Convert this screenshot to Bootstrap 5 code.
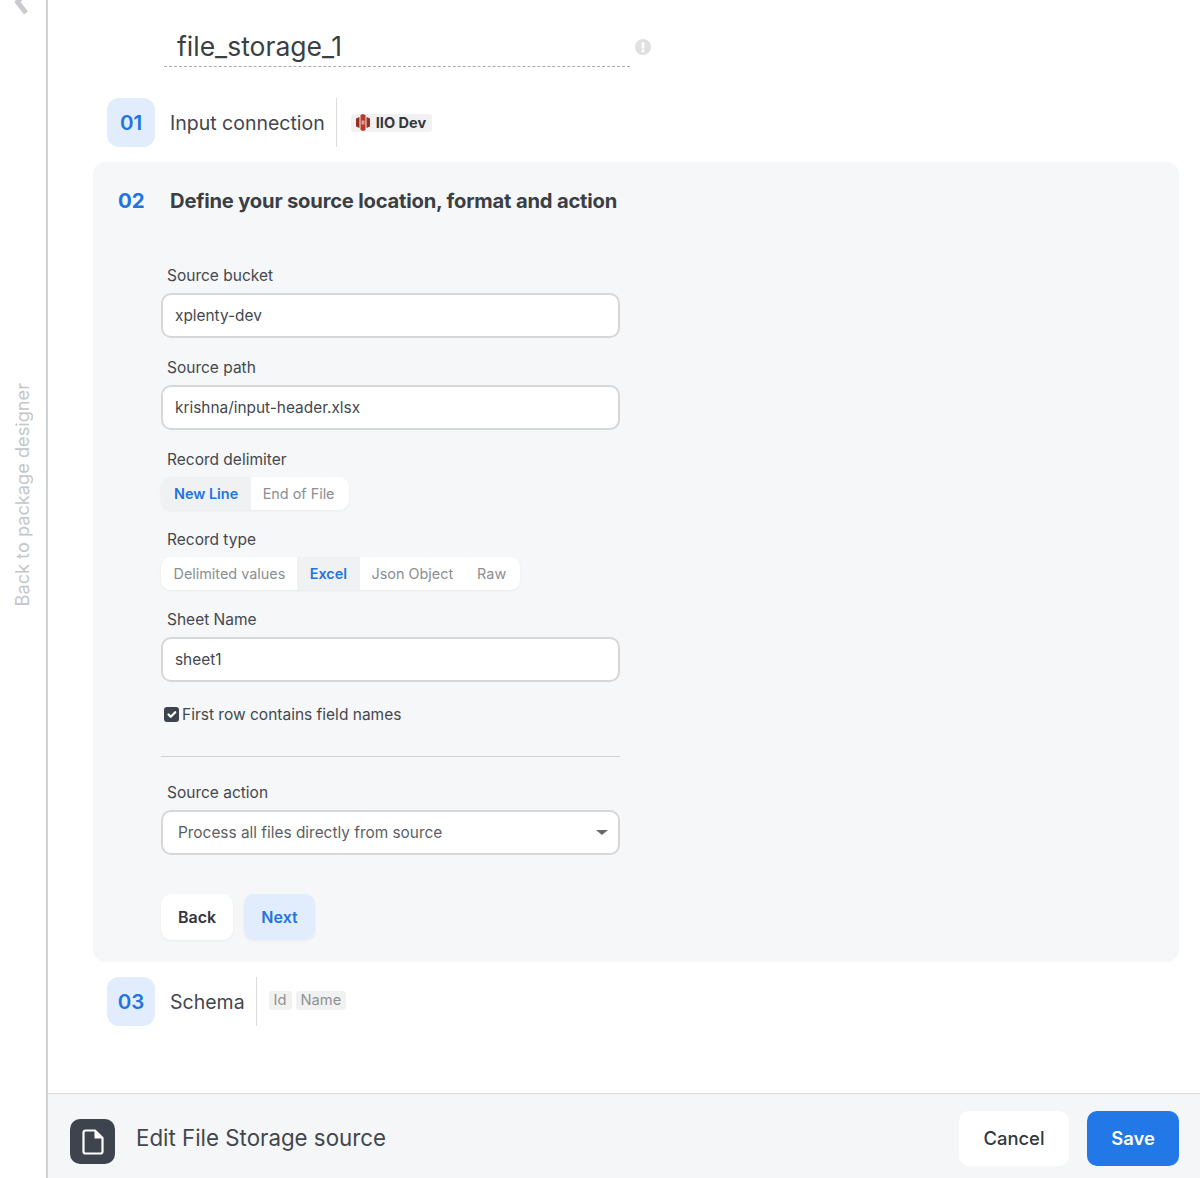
<!DOCTYPE html>
<html lang="en">
<head>
  <meta charset="UTF-8">
  <meta name="viewport" content="width=device-width, initial-scale=1.0">
  <title>Edit File Storage source</title>
  <link href="https://cdn.jsdelivr.net/npm/bootstrap@5.3.0/dist/css/bootstrap.min.css" rel="stylesheet">
  <style>
    html, body { height: 100%; }
    body {
      font-family: 'Inter', 'Liberation Sans', sans-serif;
      color: #3d4249;
      background-color: #ffffff;
      overflow: hidden;
    }
    .page-wrap { height: 1178px; }
    /* left rail */
    .back-rail {
      width: 48px;
      border-right: 2px solid #cfd0d2;
      position: relative;
      flex-shrink: 0;
    }
    .back-chevron { display: block; margin-left: 14px; }
    .back-text {
      writing-mode: vertical-rl;
      transform: rotate(180deg);
      color: #c4c6c9;
      font-size: 18.2px;
      line-height: 22px;
      white-space: nowrap;
      margin: 367px 0 0 11px;
    }
    .main-col { min-width: 0; }
    .content-area { padding-top: 28px; }
    /* title */
    .title-row { margin-left: 116px; margin-bottom: 31px; }
    .title-box {
      width: 466px;
      height: 39px;
      border-bottom: 1px dashed #a9abae;
      padding-left: 13px;
      font-size: 26.5px;
      line-height: 36px;
      color: #3a3f45;
    }
    .title-info { margin: 11px 0 0 5px; }
    /* steps */
    .step-row { margin-left: 59px; height: 49px; }
    .step-num {
      width: 48px;
      height: 49px;
      padding-top: 1px;
      border-radius: 12px;
      background-color: #e1edfc;
      color: #1f74e0;
      font-size: 20.5px;
      font-weight: 600;
    }
    .step-name { font-size: 19.5px; margin-left: 15px; padding-right: 11px; color: #42474d; height: 49px; line-height: 50px; border-right: 1px solid #dcdde0; }
    .step-tag {
      background-color: #f1f1f2;
      border-radius: 3px;
      font-size: 14.7px;
      line-height: 19px;
      padding: 0 5px;
      color: #8f9194;
    }
    .tag-dev { font-size: 14.5px; font-weight: 700; color: #33373c; margin-left: 14px; padding: 0 5px; height: 18px; width: 81px; }
    .tag-logo { margin-right: 2px; flex-shrink: 0; }
    .tag-list { margin: 0 0 2px 12px; }
    /* panel */
    .step-panel {
      margin: 15px 21px 15px 45px;
      background-color: #f6f7f9;
      border-radius: 12px;
      padding: 24px 25px 22px 25px;
      height: 800px;
    }
    .panel-head { height: 30px; margin-bottom: 50px; line-height: 30px; }
    .panel-num { color: #1f74e0; font-size: 20.5px; font-weight: 700; width: 52px; }
    .panel-title { font-size: 20.2px; font-weight: 700; color: #3a3f45; letter-spacing: -0.2px; }
    .form-wrap { width: 459px; margin-left: 43px; }
    .field-block { margin-bottom: 20px; }
    .field-label {
      display: block;
      font-size: 15.5px;
      line-height: 19px;
      margin: 0 0 8px 6px;
      color: #43484e;
    }
    .text-input {
      height: 45px;
      border: 2px solid #d6d7d9;
      border-radius: 10px;
      padding: 0 12px 1px;
      font-size: 15.4px;
      color: #43484e;
      box-shadow: none;
    }
    .select-input {
      height: 45px;
      border: 2px solid #d6d7d9;
      border-radius: 10px;
      padding: 0 30px 0 15px;
      font-size: 15.4px;
      color: #5b5f65;
      background-image: url("data:image/svg+xml,%3csvg xmlns='http://www.w3.org/2000/svg' viewBox='0 0 12 5'%3e%3cpath fill='%23666a70' d='M0 0h12L6 5z'/%3e%3c/svg%3e");
      background-size: 12px 5px;
      background-position: right 10px center;
    }
    .toggle-group {
      height: 33px;
      border-radius: 10px;
      box-shadow: 0 1px 3px rgba(0, 0, 0, 0.06);
    }
    .toggle-btn {
      background-color: #ffffff;
      color: #8b8e92;
      border: 0;
      border-radius: 0;
      font-size: 14.4px;
      line-height: 32px;
      padding: 0 12.5px;
    }
    .toggle-btn.active {
      background-color: #f0f1f2;
      color: #1f74e0;
      font-weight: 600;
      padding: 0 13px;
    }
    .toggle-group .toggle-btn:first-child { border-radius: 10px 0 0 10px; }
    .toggle-group .toggle-btn:last-child { border-radius: 0 10px 10px 0; padding-right: 14px; }
    .check-row { margin: 23px 0 0 3px; line-height: 19px; min-height: 19px; padding: 0; }
    .form-check .check-box {
      width: 15px;
      height: 15px;
      margin: 0 3px 0 0;
      border: 0;
      border-radius: 3px;
      float: none;
      flex-shrink: 0;
    }
    .form-check .check-box:checked { background-color: #3d444d; }
    .check-text { font-size: 15.5px; color: #43484e; }
    .form-rule { margin: 32px 0 26px; border-top: 1px solid #d0d1d3; opacity: 1; }
    .action-row { margin-top: 39px; }
    .action-btn {
      height: 46px;
      border: 0;
      border-radius: 10px;
      font-size: 16px;
      font-weight: 600;
      padding: 0 17px;
      box-shadow: 0 1px 3px rgba(0, 0, 0, 0.05);
    }
    .back-btn { background-color: #ffffff; color: #33373c; width: 72px; }
    .next-btn { background-color: #e1edfc; color: #1f74e0; width: 71px; margin-left: 11px; }
    /* footer */
    .foot-bar {
      height: 85px;
      background-color: #f5f6f8;
      border-top: 1px solid #d9dadc;
      padding: 17px 21px 0 22px;
      flex-shrink: 0;
    }
    .foot-icon {
      width: 45px;
      height: 45px;
      border-radius: 10px;
      background-color: #3d444d;
      margin-top: 8px;
    }
    .foot-title { font-size: 22.3px; margin: 6px 0 0 21px; line-height: 42px; color: #42474d; }
    .foot-btn {
      height: 55px;
      border: 0;
      border-radius: 10px;
      font-size: 18.4px;
      padding: 1px 0 0;
    }
    .cancel-btn { width: 110px; background-color: #ffffff; color: #33373c; font-weight: 500; margin-right: 18px; }
    .save-btn { width: 92px; background-color: #2178e6; color: #ffffff; font-weight: 600; }
  </style>
</head>
<body>

  <div class="page-wrap d-flex">

    <!-- Back rail -->
    <div class="back-rail">
      <svg class="back-chevron" width="16" height="16" viewBox="0 0 16 16"><path d="M12 -8L3.5 2l8.5 11" fill="none" stroke="#c9cbce" stroke-width="5"/></svg>
      <div class="back-text">Back to package designer</div>
    </div>

    <div class="main-col flex-grow-1 d-flex flex-column">
      <div class="content-area flex-grow-1">

        <!-- Title -->
        <div class="title-row d-flex">
          <div class="title-box">file_storage_1</div>
          <svg class="title-info" width="16" height="16" viewBox="0 0 16 16"><circle cx="8" cy="8" r="8" fill="#dfe0e1"/><rect x="6.6" y="3" width="2.8" height="6.6" rx="1.3" fill="#fff"/><circle cx="8" cy="11.8" r="1.5" fill="#fff"/></svg>
        </div>

        <!-- Step 01 -->
        <div class="step-row d-flex align-items-center">
          <div class="step-num d-flex align-items-center justify-content-center">01</div>
          <div class="step-name">Input connection</div>
          <div class="step-tag tag-dev d-flex align-items-center gap-1">
            <svg class="tag-logo" width="14" height="17" viewBox="0 0 14 17">
              <path d="M4.5 1L7 0l2.500 1v15L7 17l-2.500-1z" fill="#b83a2a"/>
              <path d="M0 4.500l3.500-1.500v11L0 12.500zM10.500 3L14 4.500v8L10.500 14z" fill="#963023"/>
              <path d="M5.500 6.500h3v4h-3z" fill="#e2a094"/>
            </svg>
            <span>IIO Dev</span>
          </div>
        </div>

        <!-- Step 02 -->
        <div class="step-panel">
          <div class="panel-head d-flex">
            <div class="panel-num">02</div>
            <div class="panel-title">Define your source location, format and action</div>
          </div>

          <form class="form-wrap">
            <div class="field-block">
              <label class="field-label" for="sourceBucket">Source bucket</label>
              <input type="text" id="sourceBucket" class="form-control text-input" value="xplenty-dev">
            </div>

            <div class="field-block">
              <label class="field-label" for="sourcePath">Source path</label>
              <input type="text" id="sourcePath" class="form-control text-input" value="krishna/input-header.xlsx">
            </div>

            <div class="field-block">
              <div class="field-label">Record delimiter</div>
              <div class="btn-group toggle-group">
                <button type="button" class="btn toggle-btn active">New Line</button>
                <button type="button" class="btn toggle-btn">End of File</button>
              </div>
            </div>

            <div class="field-block">
              <div class="field-label">Record type</div>
              <div class="btn-group toggle-group">
                <button type="button" class="btn toggle-btn">Delimited values</button>
                <button type="button" class="btn toggle-btn active">Excel</button>
                <button type="button" class="btn toggle-btn">Json Object</button>
                <button type="button" class="btn toggle-btn">Raw</button>
              </div>
            </div>

            <div>
              <label class="field-label" for="sheetName">Sheet Name</label>
              <input type="text" id="sheetName" class="form-control text-input" value="sheet1">
            </div>

            <div class="form-check check-row d-flex align-items-center">
              <input class="form-check-input check-box" type="checkbox" id="firstRow" checked>
              <label class="form-check-label check-text" for="firstRow">First row contains field names</label>
            </div>

            <hr class="form-rule">

            <div>
              <label class="field-label" for="sourceAction">Source action</label>
              <select id="sourceAction" class="form-select select-input">
                <option>Process all files directly from source</option>
              </select>
            </div>

            <div class="action-row d-flex">
              <button type="button" class="btn action-btn back-btn">Back</button>
              <button type="button" class="btn action-btn next-btn">Next</button>
            </div>
          </form>
        </div>

        <!-- Step 03 -->
        <div class="step-row d-flex align-items-center">
          <div class="step-num d-flex align-items-center justify-content-center">03</div>
          <div class="step-name">Schema</div>
          <div class="tag-list d-flex gap-1">
            <span class="step-tag">Id</span>
            <span class="step-tag">Name</span>
          </div>
        </div>
      </div>

      <!-- Footer -->
      <div class="foot-bar d-flex">
        <div class="foot-icon d-flex align-items-center justify-content-center">
          <svg width="24" height="28" viewBox="0 0 24 28"><path d="M2.500 4.500a2 2 0 0 1 2-2h9.500l7.500 7.500v13.500a2 2 0 0 1-2 2h-15a2 2 0 0 1-2-2z" fill="none" stroke="#fff" stroke-width="2.200"/><path d="M13.500 3v7.500h7.500z" fill="#fff"/></svg>
        </div>
        <div class="foot-title flex-grow-1">Edit File Storage source</div>
        <button type="button" class="btn foot-btn cancel-btn">Cancel</button>
        <button type="button" class="btn foot-btn save-btn">Save</button>
      </div>
    </div>
  </div>

  <script src="https://cdn.jsdelivr.net/npm/bootstrap@5.3.0/dist/js/bootstrap.bundle.min.js"></script>
</body>
</html>
